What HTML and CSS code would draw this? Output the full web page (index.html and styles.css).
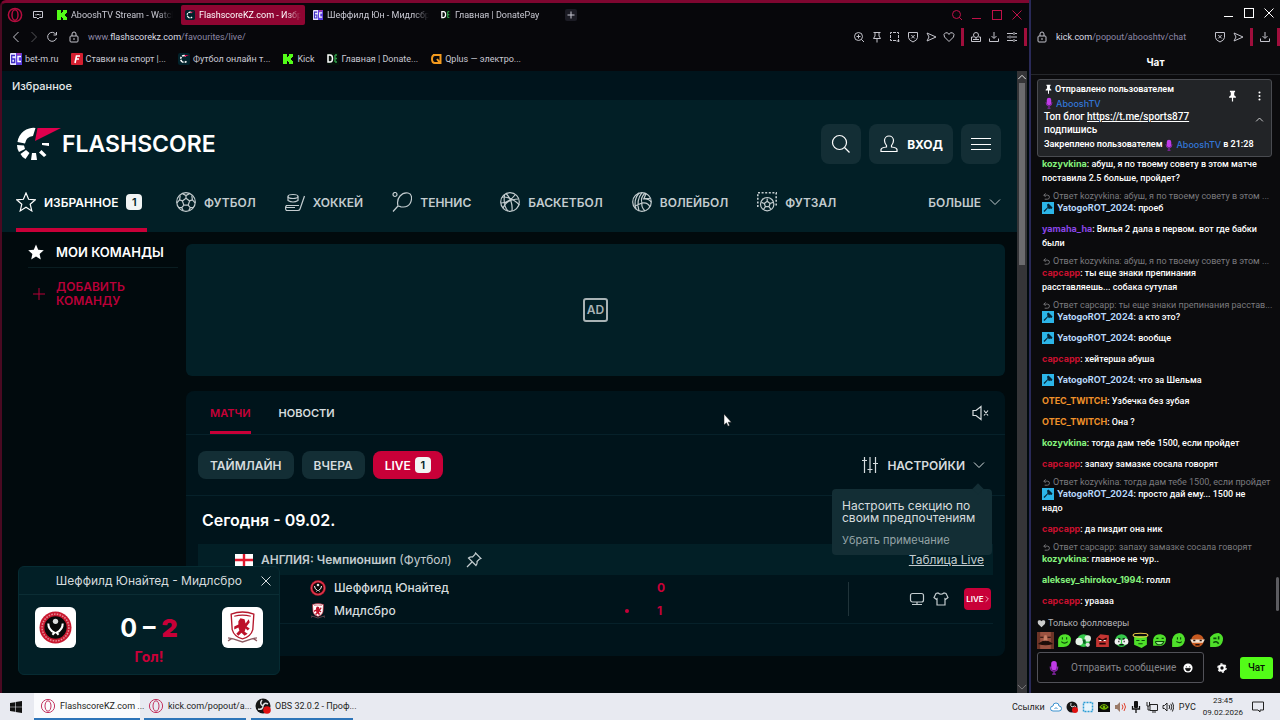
FILE: index.html
```html
<!DOCTYPE html>
<html lang="ru">
<head>
<meta charset="utf-8">
<title>FlashscoreKZ.com - Избранное</title>
<link rel="stylesheet" href="styles.css">
</head>
<body>
<svg class="defs" aria-hidden="true">
  <symbol id="opera" viewBox="0 0 16 16"><circle cx="8" cy="8" r="6.6"/><ellipse cx="8" cy="8" rx="3" ry="5.2"/></symbol>
  <symbol id="kick" viewBox="0 0 10 10"><path fill="#53fc18" d="M0 0h4v3h1V2h1V0h4v3H9v1H8v2h1v1h1v3H6V8H5V7H4v3H0z"/></symbol>
  <symbol id="fs" viewBox="0 0 12 12"><rect width="12" height="12" rx="2" fill="#02222b"/><path d="M8 3.2A3.4 3.4 0 1 0 8.8 8" fill="none" stroke="#fff" stroke-width="1.5" stroke-dasharray="4 1 2 1"/><path d="M6 4l1-2h4z" fill="#e00045"/></symbol>
  <symbol id="bc" viewBox="0 0 12 12"><rect width="12" height="12" rx="1" fill="#e8e4ff"/><path d="M6 0h6v12H6z" fill="#5a3cdf"/><path d="M5 2.500H1.700v7h3V6h-3" fill="none" stroke="#3b2bc4" stroke-width="1.300"/><path d="M11 3.500H8v5h3" fill="none" stroke="#fff" stroke-width="1.400"/><path d="M7 1h4" stroke="#f03a7b"/></symbol>
  <symbol id="dp" viewBox="0 0 12 12"><rect width="12" height="12" fill="#06100a"/><path d="M1 2v7h2q2.500 0 2.500-3.500T3 2z" fill="none" stroke="#fff" stroke-width="1.500"/><path d="M8 2v7M8 2h2M8 5.500h2M8 9h2" stroke="#2f9e48" stroke-width="1.400"/></symbol>
  <symbol id="lock" viewBox="0 0 12 12"><rect x="2" y="5" width="8" height="6" rx="1"/><path d="M4 5V3a2 2 0 0 1 4 0v2M6 7v2"/></symbol>
  <symbol id="shield" viewBox="0 0 12 12"><path d="M1.500 1.500h9v5q0 2.500-4.500 4.500-4.500-2-4.500-4.500zM4.300 4l3.400 3.400M7.700 4L4.300 7.400"/></symbol>
  <symbol id="send" viewBox="0 0 12 12"><path d="M2 2l9 4-9 4 2-4z"/></symbol>
  <symbol id="down" viewBox="0 0 12 12"><path d="M6 1v6M3.500 5L6 7.500 8.500 5M1.500 7.500v3h9v-3"/></symbol>
  <symbol id="min" viewBox="0 0 12 12"><path d="M1 9.500h9"/></symbol>
  <symbol id="max" viewBox="0 0 12 12"><rect x="1.500" y="1.500" width="9" height="9"/></symbol>
  <symbol id="x" viewBox="0 0 12 12"><path d="M1.500 1.500l9 9M10.500 1.500l-9 9"/></symbol>
  <symbol id="chev" viewBox="0 0 12 12"><path d="M1 3.500l5 5 5-5"/></symbol>
  <symbol id="chevup" viewBox="0 0 12 12"><path d="M1.500 8.500L6 4l4.500 4.500"/></symbol>
  <symbol id="ball" viewBox="0 0 20 20"><circle cx="10" cy="10" r="9.300"/><path d="M10 6.300l3.600 2.600-1.400 4.200H7.800L6.400 8.900zM10 6.300V3.500M13.600 8.900l2.800-1M12.200 13.100l2 2.600M7.800 13.100l-2 2.600M6.400 8.900l-2.800-1M6.500 1.600L10 3.500l3.500-1.900M16.400 7.900l-.6-4.400M16.400 7.900l2.700 3M14.200 15.700l3.500-.2M14.200 15.700l-1.500 3M5.800 15.700l-3.500-.2M5.800 15.700l1.500 3M3.600 7.900L.9 10.900M3.600 7.900l.6-4.400"/></symbol>
  <symbol id="mic" viewBox="0 0 12 16"><rect x="3" y="1" width="6" height="10" rx="3" fill="#c13be8"/><path d="M2 7q0 5 4 5t4-5M6 12v3M4 15h4" fill="none" stroke="#8e27b0" stroke-width="1.300"/></symbol>
  <symbol id="pin" viewBox="0 0 12 14"><path fill="#fff" d="M3 1h6v1.500H8V6l2 2v1H6.700v4.500H5.300V9H2V8l2-2V2.500H3z"/></symbol>
  <symbol id="hammer" viewBox="0 0 12 12"><rect width="12" height="12" fill="#2cb5e8"/><path d="M5 2.500l1.500-1 4 4L9.500 7 8 6.500 7 7.200 6 6l-3.500 4L1.500 9 5.500 5.200z" fill="#062536"/></symbol>
  <symbol id="reply" viewBox="0 0 10 10"><path d="M4 1.500L2 3.500l2 2M2 3.500h4a2 2 0 0 1 0 4.500H3"/></symbol>
  <symbol id="sheff" viewBox="0 0 32 32"><circle cx="16" cy="16" r="15.500" fill="#c9182f"/><circle cx="16" cy="16" r="13" fill="none" stroke="#e58a94" stroke-width="1.500" stroke-dasharray="1.500 1.200"/><circle cx="16" cy="16" r="10.800" fill="#090909"/><circle cx="16" cy="10" r="2.600" fill="#ddd"/><path d="M9 12q0 6 6 9l-2 2M23 12q0 6-6 9l2 2" fill="none" stroke="#fff" stroke-width="2"/></symbol>
  <symbol id="boro" viewBox="0 0 32 32"><path d="M5 3q11-4 22 0l-1 15q-2 7-10 9-8-2-10-9z" fill="#fff" stroke="#b5172b" stroke-width="1.300"/><path d="M8 5q8-2 16 0" stroke="#b5172b" fill="none"/><path d="M12 10l2-3 4 1 1 4 3-4 1 3-3 4 3 2-2 2-2-2-1 3 3 2-3 2-3-3-3 3-2-2 3-3-1-3-4 2 0-3 4-2z" fill="#bd1129"/><path d="M2 26l5 1 9 3 9-3 5-1M2 29l3-2M30 29l-3-2" fill="none" stroke="#8d5b62" stroke-width="1.300"/></symbol>
</svg>

<div class="desktop">
  <section class="browser">
    <div class="tabs">
      <svg class="ico opera"><use href="#opera"/></svg>
      <svg class="ico pad" viewBox="0 0 14 12"><path d="M2.500 2.500h9v6H8.500L7 10 5.500 8.500h-3zM5 5v1.500M9 5v1.500M6 5.500h2"/></svg>
      <button class="tab"><svg><use href="#kick"/></svg><span>AbooshTV Stream - Watch</span></button>
      <button class="tab active"><svg><use href="#fs"/></svg><span>FlashscoreKZ.com - Избр</span></button>
      <button class="tab"><svg><use href="#bc"/></svg><span>Шеффилд Юн - Мидлсбр</span></button>
      <button class="tab"><svg><use href="#dp"/></svg><span>Главная | DonatePay</span></button>
      <button class="plus" aria-label="Новая вкладка"><svg class="ico" viewBox="0 0 12 12"><path d="M6 2.500v7M2.500 6h7"/></svg></button>
      <div class="controls red">
        <svg class="ico" viewBox="0 0 12 12"><circle cx="5.500" cy="5.500" r="4"/><path d="M8 8l3 3"/></svg>
        <svg class="ico"><use href="#min"/></svg><svg class="ico"><use href="#max"/></svg><svg class="ico"><use href="#x"/></svg>
      </div>
    </div>
    <div class="toolbar">
      <svg class="ico"><use href="#chev" transform="rotate(90 6 6)"/></svg>
      <svg class="ico dim"><use href="#chev" transform="rotate(-90 6 6)"/></svg>
      <svg class="ico" viewBox="0 0 12 12"><path d="M10 3.500A4.500 4.500 0 1 0 10.500 7M10.500 1v3h-3"/></svg>
      <svg class="ico padlock"><use href="#lock"/></svg>
      <p class="url">www.<b>flashscorekz.com</b>/favourites/live/</p>
      <div class="tools">
        <svg class="ico" viewBox="0 0 12 12"><circle cx="5.500" cy="5.500" r="4"/><path d="M8.500 8.500L11 11M3.500 5.500h4M5.500 3.500v4"/></svg>
        <svg class="ico" viewBox="0 0 12 12"><path d="M2.500 1.500h7M4 1.500V5L2.500 7.500h7L8 5V1.500M6 7.500v4"/></svg>
        <svg class="ico" viewBox="0 0 12 12"><path d="M9.500 7V1.500h-8v8H7M9.500 8v4M7.500 10h4" stroke-dasharray="3 1"/></svg>
        <svg class="ico"><use href="#shield"/></svg>
        <svg class="ico"><use href="#send"/></svg>
        <svg class="ico" viewBox="0 0 12 12"><path d="M6 10.500L1.500 6Q0 3 2.500 1.800 5 1 6 3.500 7 1 9.500 1.800 12 3 10.500 6z"/></svg>
      </div>
      <i class="mark"></i>
      <div class="tools">
        <svg class="ico" viewBox="0 0 12 12"><circle cx="6" cy="4" r="2.500"/><path d="M3.500 6h-2v4.500h9V6h-2M3 8.500h6M6 6.500v2"/></svg>
        <svg class="ico"><use href="#down"/></svg>
        <svg class="ico" viewBox="0 0 12 12"><path d="M1 2.500h6M9 2.500h2M1 6h2M5 6h6M1 9.500h6M9 9.500h2M8 1v3M4 4.500v3M8 8v3"/></svg>
      </div>
      <i class="mark"></i>
    </div>
    <nav class="bookmarks">
      <a href="#"><svg><use href="#bc"/></svg>bet-m.ru</a>
      <a href="#"><svg viewBox="0 0 12 12"><rect width="12" height="12" rx="1" fill="#d41f30"/><path d="M4 10l1.500-7H9M5 6h3" stroke="#fff" stroke-width="1.600" fill="none"/></svg>Ставки на спорт |...</a>
      <a href="#"><svg><use href="#fs"/></svg>Футбол онлайн т...</a>
      <a href="#"><svg viewBox="-1 -1 12 12"><use href="#kick" width="10" height="10"/></svg>Kick</a>
      <a href="#"><svg><use href="#dp"/></svg>Главная | Donate...</a>
      <a href="#"><svg viewBox="0 0 12 12"><path d="M3 2h7.500v8H5Q2 10 2 6t3-4M7 6l3 4" fill="none" stroke="#f39a1e" stroke-width="2"/></svg>Qplus — электро...</a>
    </nav>

    <div class="viewport">
      <div class="site">
        <div class="crumb">Избранное</div>
        <header class="head">
          <div class="brandrow">
            <a class="brand" href="#">
              <svg viewBox="0 0 46 34"><g fill="#fff"><path d="M1.500 15A16 16 0 0 1 19.500 1L17 9a9 9 0 0 0-8 7.500zM1 18l7 .5 1 3.500-6 3Q1 22 1 18zM4.500 27l5.500-4 3.500 3-4 6q-3-1-5-5zM15 33l1-7h4l1 7zM23 25.500l2.500-2.500 5 5-2.500 2zM26 16h7v3l-7-1z"/></g><path d="M21.500 1h23.500L19 14z" fill="#e0004d"/></svg>
              <span>FLASHSCORE</span>
            </a>
            <div class="actions">
              <button aria-label="Поиск"><svg class="ln" viewBox="0 0 20 20"><circle cx="8.500" cy="8.500" r="7"/><path d="M13.500 13.500l5 5"/></svg></button>
              <button><svg class="ln" viewBox="0 0 20 20"><path d="M7.500 11.500Q5.500 9 5.500 6.500a4.500 4.500 0 0 1 9 0q0 2.500-2 5v1.500q5 .5 5.500 2.500v2H2v-2q.5-2 5.500-2.500z"/></svg>ВХОД</button>
              <button aria-label="Меню"><svg class="ln" viewBox="0 0 20 20"><path d="M0 4.500h20M0 10.500h20M0 15.500h20"/></svg></button>
            </div>
          </div>
          <nav class="sports">
            <a class="on" href="#"><svg class="ln" viewBox="0 0 20 20"><path d="M10 1l2.600 6.300 6.800.5-5.200 4.400 1.600 6.700L10 15.300l-5.800 3.600 1.600-6.700L.6 7.800l6.800-.5z"/></svg>ИЗБРАННОЕ<em class="num">1</em></a>
            <a href="#"><svg class="ln"><use href="#ball"/></svg>ФУТБОЛ</a>
            <a href="#"><svg class="ln" viewBox="0 0 20 20"><ellipse cx="8" cy="4.500" rx="5" ry="2"/><path d="M3 4.500v4q5 3 10 0v-4M19.500 4L15 17q-.5 1.500-2 1.500H1.500q-1-1-1-2.500t1-2.500H14M1 15.500h9"/></svg>ХОККЕЙ</a>
            <a href="#"><svg class="ln" viewBox="0 0 20 20"><circle cx="3" cy="2.500" r="2"/><path d="M6 14Q4.500 8 8 4t8-3q4 1 3.500 6t-4 7-9.500 0zM6 14q2 0 3 1M6 14l-5 5.500"/></svg>ТЕННИС</a>
            <a href="#"><svg class="ln" viewBox="0 0 20 20"><circle cx="10" cy="10" r="9.300"/><path d="M6 1.500q7 7 6 17.500M2 5q10 0 17.500 8M1 11q8 0 14-8M3 16Q7 7 18.500 7M8 19Q3 14 4.500 3"/></svg>БАСКЕТБОЛ</a>
            <a href="#"><svg class="ln" viewBox="0 0 20 20"><circle cx="10" cy="10" r="9.300"/><path d="M7 1Q1 8 4 17M10 .700Q4 8 7 19M13 1q-5 5-3 10M11 7q6-1 8 3M10 11q6-1 8 4M10 11q-1 4 3 8M3 14l7-3M14 1.500l-2 5 6 0"/></svg>ВОЛЕЙБОЛ</a>
            <a href="#"><svg class="ln" viewBox="0 0 20 20"><path d="M.800 15V.800h18.400V15" stroke-width="1.600" stroke-dasharray="2 1.600"/><g transform="translate(3 5) scale(.72)" stroke-width="1.700"><circle cx="10" cy="10" r="9.300"/><path d="M10 6l4 3-1.500 4.500h-5L6 9zM10 6V2M14 9l4-1.500M12.500 13.500l2.500 3.500M7.500 13.500L5 17M6 9L2 7.500"/></g></svg>ФУТЗАЛ</a>
            <a class="more" href="#">БОЛЬШЕ<svg class="ico"><use href="#chev"/></svg></a>
          </nav>
        </header>
        <div class="columns">
          <aside class="side">
            <h2><svg viewBox="0 0 16 16"><path fill="#fff" d="M8 .500l2.200 5.200 5.600.5-4.200 3.700 1.200 5.500L8 12.500l-4.800 2.900 1.200-5.500L.2 6.200l5.600-.5z"/></svg>МОИ КОМАНДЫ</h2>
            <button><svg class="ico" viewBox="0 0 12 12"><path d="M6 0v12M0 6h12"/></svg>ДОБАВИТЬ КОМАНДУ</button>
          </aside>
          <main class="main">
            <div class="ad"><span>AD</span></div>
            <section class="card">
              <div class="cardtabs">
                <a class="on" href="#">МАТЧИ</a><a href="#">НОВОСТИ</a>
                <svg class="ln mute" viewBox="0 0 18 16"><path d="M1 5.500h3l5-4v13l-5-4H1zM12 5.500l4 5M16 5.500l-4 5"/></svg>
              </div>
              <div class="filters">
                <button>ТАЙМЛАЙН</button><button>ВЧЕРА</button><button class="live">LIVE<em class="num">1</em></button>
                <div class="settings">
                  <svg class="ln" viewBox="0 0 18 18"><path d="M3.500 1v16M9 1v16M14.500 1v16M1 4.500h5M6.500 13.500h5M12 7.500h5"/></svg>НАСТРОЙКИ<svg class="ico"><use href="#chev"/></svg>
                  <div class="tip"><p>Настроить секцию по своим предпочтениям</p><a href="#">Убрать примечание</a></div>
                </div>
              </div>
              <h3>Сегодня - 09.02.</h3>
              <div class="league">
                <svg class="flag" viewBox="0 0 18 12"><path fill="#fff" d="M0 0h18v12H0z"/><path d="M9 0v12M0 6h18" stroke="#e0182d" stroke-width="2.400"/></svg>
                <p><b>АНГЛИЯ: Чемпионшип</b> (Футбол)</p>
                <svg class="ln pushpin" viewBox="0 0 16 16"><path d="M9.500 1l5.500 5.500-1.500.5-2.500 2.500q.5 2-1 4L2.500 6q2-1.500 4-1L9 2.500zM6 10l-5 5"/></svg>
                <a href="#">Таблица Live</a>
              </div>
              <div class="match">
                <div class="team"><svg><use href="#sheff"/></svg><span>Шеффилд Юнайтед</span><i></i><b>0</b></div>
                <div class="team"><svg><use href="#boro"/></svg><span>Мидлсбро</span><i class="dot"></i><b>1</b></div>
                <div class="extras">
                  <svg class="ln" viewBox="0 0 16 14"><rect x="1.500" y="1.500" width="13" height="8.500" rx="2"/><path d="M8 10v2.500M3 12.500h10"/></svg>
                  <svg class="ln" viewBox="0 0 16 14"><path d="M5 1q3 2.500 6 0l2 .5 2 4-2.500 2-.5-.5v6H4V7l-.5.500L1 5.500 3 1.500z"/></svg>
                  <button>LIVE<svg viewBox="0 0 6 10"><path d="M1 1l4 4-4 4"/></svg></button>
                </div>
              </div>
            </section>
          </main>
        </div>
      </div>
      <div class="scroll"><svg class="ico" viewBox="0 0 12 12"><use href="#chevup"/></svg><i></i><svg class="ico end" viewBox="0 0 12 12"><use href="#chev"/></svg></div>
      <div class="goal">
        <div class="goalhead"><span>Шеффилд Юнайтед - Мидлсбро</span><button aria-label="Закрыть"><svg class="ico"><use href="#x"/></svg></button></div>
        <div class="goalbody">
          <span class="crest"><svg><use href="#sheff"/></svg></span>
          <p class="score">0 – <b>2</b></p>
          <span class="crest"><svg><use href="#boro"/></svg></span>
        </div>
        <p class="gol">Гол!</p>
      </div>
      <svg class="cursor" viewBox="0 0 9 14"><path fill="#fff" stroke="#111" stroke-width=".500" d="M1 1v11l2.500-2.200L5 13.200l1.600-.7L5.200 9.200h3.200z"/></svg>
    </div>
  </section>

  <section class="chatwin">
    <div class="controls white"><svg class="ico"><use href="#min"/></svg><svg class="ico"><use href="#max"/></svg><svg class="ico"><use href="#x"/></svg></div>
    <div class="toolbar">
      <svg class="ico"><use href="#lock"/></svg>
      <p class="url"><b>kick.com</b>/popout/abooshtv/chat</p>
      <svg class="ico"><use href="#shield"/></svg><svg class="ico"><use href="#send"/></svg><i class="mark"></i><svg class="ico"><use href="#down"/></svg><i class="mark"></i>
    </div>
    <h1>Чат</h1>
    <div class="pinned">
      <div class="pintext">
        <p class="small"><svg><use href="#pin"/></svg>Отправлено пользователем</p>
        <p class="small"><svg class="mic"><use href="#mic"/></svg><a href="#">AbooshTV</a></p>
        <p>Топ блог <u>https://t.me/sports877</u><br>подпишись</p>
        <p class="small foot">Закреплено пользователем <svg class="mic"><use href="#mic"/></svg><a href="#">AbooshTV</a> в 21:28</p>
      </div>
      <div class="pinbtns"><svg><use href="#pin"/></svg><svg viewBox="0 0 12 14" fill="#fff"><circle cx="6" cy="3" r="1.200"/><circle cx="6" cy="7" r="1.200"/><circle cx="6" cy="11" r="1.200"/></svg><svg class="ico up" viewBox="0 0 12 12"><use href="#chevup"/></svg></div>
    </div>
    <ul class="messages">
      <li><b class="g">kozyvkina</b>: абуш, я по твоему совету в этом матче поставила 2.5 больше, пройдет?</li>
      <li><p><svg class="ico"><use href="#reply"/></svg>Ответ kozyvkina: абуш, я по твоему совету в этом ...</p><svg class="hm"><use href="#hammer"/></svg><b class="y">YatogoROT_2024</b>: проеб</li>
      <li><b class="v">yamaha_ha</b>: Вилья 2 дала в первом. вот где бабки были</li>
      <li><p><svg class="ico"><use href="#reply"/></svg>Ответ kozyvkina: абуш, я по твоему совету в этом ...</p><b class="r">capcapp</b>: ты еще знаки препинания расставляешь... собака сутулая</li>
      <li><p><svg class="ico"><use href="#reply"/></svg>Ответ capcapp: ты еще знаки препинания расстав...</p><svg class="hm"><use href="#hammer"/></svg><b class="y">YatogoROT_2024</b>: а кто это?</li>
      <li><svg class="hm"><use href="#hammer"/></svg><b class="y">YatogoROT_2024</b>: вообще</li>
      <li><b class="r">capcapp</b>: хейтерша абуша</li>
      <li><svg class="hm"><use href="#hammer"/></svg><b class="y">YatogoROT_2024</b>: что за Шельма</li>
      <li><b class="o">OTEC_TWITCH</b>: Узбечка без зубая</li>
      <li><b class="o">OTEC_TWITCH</b>: Она ?</li>
      <li><b class="g">kozyvkina</b>: тогда дам тебе 1500, если пройдет</li>
      <li><b class="r">capcapp</b>: запаху замазке сосала говорят</li>
      <li><p><svg class="ico"><use href="#reply"/></svg>Ответ kozyvkina: тогда дам тебе 1500, если пройдет</p><svg class="hm"><use href="#hammer"/></svg><b class="y">YatogoROT_2024</b>: просто дай ему... 1500 не надо</li>
      <li><b class="r">capcapp</b>: да пиздит она ник</li>
      <li><p><svg class="ico"><use href="#reply"/></svg>Ответ capcapp: запаху замазке сосала говорят</p><b class="g">kozyvkina</b>: главное не чур..</li>
      <li><b class="g">aleksey_shirokov_1994</b>: голлл</li>
      <li><b class="r">capcapp</b>: ураааа</li>
    </ul>
    <div class="composer">
      <p class="followers"><svg viewBox="0 0 12 12"><path fill="#ccc" d="M6 11L1.500 6.500Q0 3 2.500 1.800 5 1 6 3 7 1 9.500 1.800 12 3 10.500 6.500z"/></svg>Только фолловеры</p>
      <div class="emotes">
        <svg viewBox="0 0 16 16"><path fill="#9a5240" d="M0 0h16v16H0z"/><path fill="#6d3427" d="M0 0h3v16H0zM13 0h3v16h-3z"/><path d="M2 11q6-5 12 0-6 2-12 0zM3 5h3M10 5h3" fill="#1d0e0a" stroke="#1d0e0a"/><path d="M7 3h2l1 5H6z" fill="#c98066"/></svg>
        <svg viewBox="0 0 16 16"><path fill="#4fe02a" d="M2 14V7q1-5 7-5 6 1 5 6-1 6-7 6z"/><path d="M6 5v2M10 5v2M5 9q3 3 6 0" stroke="#0a4a08" fill="none"/></svg>
        <svg viewBox="0 0 16 16"><circle cx="8" cy="8" r="6" fill="#35c84a"/><circle cx="4" cy="9" r="3.500" fill="#e7f3e8"/><circle cx="12" cy="6" r="3" fill="#dff0e0"/><path d="M7 7h3v4H8z" fill="#0b5f20"/><circle cx="12" cy="12" r="2" fill="#ddd"/></svg>
        <svg viewBox="0 0 16 16"><path fill="#c53532" d="M2 14V6l4-4 8 1v11z"/><path d="M4 6l4 2M12 6L8 8M5 11h6" stroke="#280606" stroke-width="1.600"/><path d="M5 8h2M9 8h2" stroke="#fff"/></svg>
        <svg viewBox="0 0 16 16"><circle cx="8" cy="8" r="6" fill="#35c84a"/><circle cx="4.500" cy="9" r="3" fill="#f2f2f2"/><circle cx="11.500" cy="9" r="3" fill="#f2f2f2"/><path d="M5 6l2 1M11 6L9 7M5 9h1M10 9h1M6 12h4" stroke="#111" stroke-width="1.400"/></svg>
        <svg viewBox="0 0 16 16"><path fill="#4fe02a" d="M2 4h12v8l-5 3-7-3z"/><ellipse cx="8" cy="3" rx="7" ry="1.800" fill="none" stroke="#f2cf4a"/><path d="M4 8h3M9 8h3M6 11h4" stroke="#0a4a08"/></svg>
        <svg viewBox="0 0 16 16"><path fill="#4fe02a" d="M2 13V7q1-5 7-5 6 1 5 6-1 6-7 5z"/><path d="M5 6h2M10 6h2M4 9h8q-1 3-4 3T4 9" stroke="#0a4a08" fill="#9be88a"/></svg>
        <svg viewBox="0 0 16 16"><path fill="#4fe02a" d="M2 14V7q2-6 7-6 5 1 5 7-1 6-7 6z"/><path d="M7 5v2M10 5v2M6 9q3 2 5 0" stroke="#0a4a08" fill="none"/></svg>
        <svg viewBox="0 0 16 16"><circle cx="8" cy="8" r="6" fill="#c75a20"/><path d="M1 7h14l-2 3H3z" fill="#f2e3d2"/><path d="M4 8h2M10 8h2M6 12h4" stroke="#26100a" stroke-width="1.600"/></svg>
        <svg viewBox="0 0 16 16"><path fill="#4fe02a" d="M2 14V5q3-4 8-4 5 2 4 7-1 6-7 6z"/><path d="M5 6h3M10 4v3M5 10q3-2 5 1" stroke="#0a4a08" stroke-width="1.500" fill="none"/></svg>
      </div>
      <div class="sendrow">
        <label class="field"><svg><use href="#mic"/></svg><input type="text" aria-label="Сообщение" placeholder="Отправить сообщение"><svg class="smile" viewBox="0 0 12 12"><circle cx="6" cy="6" r="5.500" fill="#fff"/><path d="M3.500 4.500h1M7.500 4.500h1M3 6.500h6Q8.500 9.500 6 9.500T3 6.500" stroke="#111" fill="#111"/></svg></label>
        <button class="gear" aria-label="Настройки чата"><svg viewBox="0 0 12 12"><circle cx="6" cy="6" r="3.200" fill="none" stroke="#fff" stroke-width="2.400"/><circle cx="6" cy="6" r="4.900" fill="none" stroke="#fff" stroke-width="1.600" stroke-dasharray="2.500 2.630"/></svg></button>
        <button class="send">Чат</button>
      </div>
    </div>
    <i class="thumb"></i>
  </section>
</div>

<footer class="taskbar">
  <button class="start" aria-label="Пуск"><svg viewBox="0 0 12 12"><path fill="#111" d="M0 2l5-.8V5.700H0zM5.600 1L12 0v5.700H5.600zM0 6.300h5v4.500L0 10zM5.600 6.300H12V12l-6.400-1z"/></svg></button>
  <button class="task on"><svg class="opera"><use href="#opera"/></svg>FlashscoreKZ.com ...</button>
  <button class="task"><svg class="opera"><use href="#opera"/></svg>kick.com/popout/a...</button>
  <button class="task"><svg viewBox="0 0 16 16"><circle cx="8" cy="8" r="7.500" fill="#161616"/><path d="M7 2q-3 4 1 6M3 11q5 1 5-3M13 6q-4-2-5 2" stroke="#ddd" stroke-width="1.500" fill="none"/><circle cx="12" cy="12" r="3.800" fill="#e01010"/></svg>OBS 32.0.2 - Проф...</button>
  <div class="tray">
    <span>Ссылки</span>
    <svg viewBox="0 0 12 12"><path d="M3 10a2.500 2.500 0 0 1 0-5 3 3 0 0 1 6 0 2.500 2.500 0 0 1 0 5zM4.500 8L6 6.500 7.500 8" fill="#fff" stroke="#3c93d0"/></svg>
    <svg viewBox="0 0 12 12"><circle cx="6" cy="6" r="5.500" fill="#161616"/><path d="M5 2q-1 3 1 4 3-2 4 0" stroke="#ddd" fill="none"/><circle cx="9" cy="9" r="3" fill="#e01010"/></svg>
    <svg viewBox="0 0 12 12"><rect x="1.500" y="1.500" width="9" height="9" fill="#e8f5fc" stroke="#2b9bd4" stroke-width="1.500" stroke-dasharray="2 1"/></svg>
    <svg viewBox="0 0 12 12"><path fill="#0a0a0a" d="M0 1h12v10H0z"/><path d="M2 6q4-5 8 0-4 4-8 0z" fill="none" stroke="#76b900" stroke-width="1.200"/><circle cx="6" cy="6" r="1.400" fill="#76b900"/></svg>
    <svg viewBox="0 0 12 12"><path d="M1 4h2l3-3v10L3 8H1z" fill="#9a7a68"/><path d="M8 3.500q2 2.500 0 5M10 2q3 4 0 8" stroke="#e0402c" fill="none"/></svg>
    <svg viewBox="0 0 12 12"><rect x="4" y="0" width="4" height="7" rx="1" fill="#111"/><path d="M2.500 5v3h7V5M6 8v4" stroke="#111" stroke-width="1.300" fill="none"/></svg>
    <svg viewBox="0 0 12 12"><path d="M4 3.500h7.500v6H4zM6 11h4M1 1v4h2.500V1M2 5v4h2" stroke="#222" fill="none"/></svg>
    <svg viewBox="0 0 12 12"><path d="M1 4.500h1.500L5 2v8L2.500 7.500H1zM7 4q1.500 2 0 4M8.800 2.800q2.200 3 0 6.400M10.400 1.500q3 4.500 0 9" stroke="#222" fill="none"/></svg>
    <span>РУС</span>
    <time>23:45<br>09.02.2026</time>
    <svg viewBox="0 0 12 12"><path d="M.500 1h11v8H8v2L6 9H.500z" stroke="#222" fill="none"/></svg>
  </div>
</footer>
</body>
</html>
```
FILE: styles.css
```css
* { box-sizing: border-box; }
body {
  margin: 0;
  min-height: 100vh;
  display: flex;
  flex-direction: column;
  background: #000;
  color: #fff;
  font-family: Inter, "Noto Sans", sans-serif;
  font-size: 12px;
}
p, h1, h2, h3, ul { margin: 0; padding: 0; }
a { color: inherit; text-decoration: none; }
button { border: 0; padding: 0; margin: 0; background: none; color: inherit; font: inherit; }
svg { flex: none; display: block; width: 12px; height: 12px; }
.defs { position: absolute; width: 0; height: 0; }
.ico, .ln { fill: none; stroke: currentColor; stroke-width: 1; }
.ln { stroke-width: 1.2; }

.desktop { flex: 1; display: flex; min-height: 0; }

/* Main browser window */
.browser {
  flex: 1;
  min-width: 0;
  display: flex;
  flex-direction: column;
  background: #07070b;
  border-top: 3px solid #7d0630;
  border-left: 2px solid #4a0a22;
  border-top-left-radius: 6px;
}
.tabs, .bookmarks, .toolbar { font-family: Roboto, "Noto Sans", sans-serif; }
.tabs { display: flex; align-items: center; height: 23px; padding: 0 6px 0 5px; font-size: 9px; color: #c9c9d3; }
.tabs .opera { width: 16px; height: 16px; color: #b50d3f; stroke-width: 1.5; }
.tabs .pad { width: 14px; margin: 0 8px; }
.tab { display: flex; align-items: center; gap: 4px; width: 124px; height: 20px; padding: 0 4px; margin-right: 4px; }
.tab span { flex: 1; text-align: left; overflow: hidden; white-space: nowrap; -webkit-mask-image: linear-gradient(90deg, #000 85%, transparent); mask-image: linear-gradient(90deg, #000 85%, transparent); }
.tab svg { width: 10px; height: 10px; }
.tab.active { background: #8f0532; color: #fff; border-radius: 2px; }
.plus { padding: 0; border-radius: 2px; background: #1b1b24; }
.controls { display: flex; gap: 8px; margin-left: auto; }
.red { color: #c01048; }
.toolbar { display: flex; align-items: center; gap: 6px; height: 21px; padding: 0 2px 0 8px; color: #c4c4cc; }
.padlock { margin-left: 4px; }
.dim { opacity: .4; }
.url { flex: 1; font-size: 9px; color: #8d88a6; margin-left: 2px; white-space: nowrap; }
.url b { font-weight: 400; color: #dcdce4; }
.tools { display: flex; gap: 6px; }
.mark { width: 3px; height: 18px; background: #a00e3c; }
.bookmarks { display: flex; align-items: center; gap: 12px; height: 24px; padding: 0 8px 1px; font-size: 9px; color: #c9c9d3; white-space: nowrap; }
.bookmarks a { display: flex; align-items: center; gap: 3px; }

.viewport { flex: 1; display: flex; position: relative; background: #010a0d; }
.site { flex: 1; min-width: 0; }
.crumb { height: 29px; padding: 8px 10px; line-height: 14px; font-size: 11px; font-weight: 500; background: #00141c; color: #e4e8e9; }
.head { background: #021f26; padding: 24px 16px 0 14px; }
.brandrow { display: flex; align-items: center; justify-content: space-between; }
.brand { display: flex; align-items: center; font-size: 23px; font-weight: 600; }
.brand svg { width: 46px; height: 34px; }
.actions { display: flex; gap: 8px; }
.actions button { display: flex; align-items: center; gap: 8px; height: 40px; padding: 0 10px; border-radius: 8px; background: #132e35; font-weight: 700; }
.actions svg, .sports .ln { width: 20px; height: 20px; }
.sports { display: flex; gap: 29px; height: 68px; font-weight: 600; color: #c3cccf; }
.sports a { display: flex; align-items: center; gap: 8px; padding-top: 8px; }
.sports .on { min-width: 131px; color: #fff; border-bottom: 4px solid #c80038; padding-top: 12px; }
.sports .more { margin-left: auto; }
.num { min-width: 16px; height: 16px; border-radius: 4px; background: #f1f4f4; color: #021f26; font-size: 11px; line-height: 16px; font-style: normal; text-align: center; }

.columns { display: flex; gap: 8px; padding: 12px 12px 12px 26px; }
.side { width: 150px; }
.side h2 { display: flex; align-items: center; gap: 12px; height: 24px; padding-bottom: 8px; border-bottom: 1px solid #0a1d21; font-size: 13px; font-weight: 600; white-space: nowrap; }
.side h2 svg { width: 16px; height: 16px; }
.side button { display: flex; align-items: center; gap: 11px; width: 120px; margin-top: 12px; padding-left: 5px; color: #b80038; font-size: 12px; font-weight: 600; line-height: 14px; text-align: left; }
.main { flex: 1; min-width: 0; }
.ad { display: flex; align-items: center; justify-content: center; height: 132px; border-radius: 6px; background: #021f26; }
.ad span { padding: 2px; border: 2px solid #a9b3b5; border-radius: 3px; color: #a9b3b5; font-weight: 600; line-height: 16px; }
.card { margin-top: 15px; padding-bottom: 32px; border-radius: 8px; background: #00141b; }
.cardtabs { display: flex; gap: 28px; height: 44px; padding: 0 15px 0 24px; border-bottom: 1px solid #06212a; font-size: 11px; font-weight: 600; line-height: 14px; color: #d6dcde; }
.cardtabs a { padding-top: 15px; }
.cardtabs .on { color: #c80038; border-bottom: 3px solid #c80038; }
.mute { width: 18px; height: 16px; margin: 14px 0 0 auto; }
.filters { display: flex; align-items: center; gap: 8px; padding: 16px 20px 16px 12px; border-bottom: 1px solid #06212a; font-size: 12px; font-weight: 600; color: #d6dcde; }
.filters button { display: flex; align-items: center; gap: 4px; height: 28px; padding: 0 12px; border-radius: 8px; background: #132e35; }
.filters .live { background: #c80038; color: #fff; }
.settings { position: relative; display: flex; align-items: center; gap: 8px; margin-left: auto; }
.settings .ln { width: 18px; height: 18px; }
.tip { position: absolute; top: 33px; right: -7px; width: 160px; padding: 11px 10px 9px; border-radius: 4px; background: #132e35; font-weight: 400; line-height: 12px; }
.tip::before { content: ""; position: absolute; top: -4px; right: 10px; width: 8px; height: 8px; background: #132e35; transform: rotate(45deg); }
.tip p { font-size: 12px; }
.tip a { display: block; margin-top: 10px; font-size: 11px; color: #94a3a6; }
.card h3 { padding: 14px 16px; font-size: 16px; font-weight: 600; line-height: 20px; }
.league { display: flex; align-items: center; height: 31px; margin: 0 12px; padding: 0 9px 0 37px; background: #021f26; color: #c3cccf; }
.league p { margin: 0 14px 0 8px; }
.league b { font-weight: 600; }
.league a { margin-left: auto; text-decoration: underline; }
.flag { width: 18px; height: 12px; }
.pushpin { width: 16px; height: 16px; }
.match { display: grid; grid-template-columns: minmax(0, 1fr) 145px; margin: 0 12px; padding: 1px 0; border-bottom: 1px solid #06212a; }
.team { grid-column: 1; display: grid; grid-template-columns: 16px 297px 34px 10px; align-items: center; padding-left: 112px; height: 23px; font-weight: 500; color: #d6dcde; }
.team svg { width: 16px; height: 16px; }
.team span { padding-left: 8px; }
.team b { color: #c80038; }
.dot { width: 4px; height: 4px; margin-left: 2px; border-radius: 2px; background: #c80038; }
.extras { grid-column: 2; grid-row: 1 / 3; display: flex; align-items: center; justify-content: flex-end; gap: 8px; margin: 6px 2px 6px 0; border-left: 1px solid #20343a; color: #c3cccf; }
.extras .ln { width: 16px; height: 14px; }
.extras button { display: flex; align-items: center; justify-content: center; gap: 1px; width: 27px; height: 22px; margin-left: 7px; border-radius: 4px; background: #c80038; color: #fff; font-size: 8px; font-weight: 600; }
.extras button svg { width: 4px; height: 8px; fill: none; stroke: #fff; }
.scroll { display: flex; flex-direction: column; align-items: center; width: 10px; margin-right: 2px; background: #353538; color: #fff; }
.scroll svg { width: 10px; }
.scroll i { width: 6px; height: 182px; background: #6b6b6e; }
.scroll .end { margin-top: auto; opacity: .4; }

.goal { position: absolute; left: 16px; bottom: 18px; width: 262px; padding-bottom: 9px; border: 1px solid #062b32; border-radius: 6px; background: #021f26; }
.goalhead { display: flex; align-items: center; justify-content: flex-end; gap: 18px; height: 28px; padding: 0 7px; border-bottom: 1px solid #0b2d34; color: #d6dcde; }
.goalbody { display: flex; align-items: center; justify-content: space-between; padding: 12px 16px 0; }
.crest { padding: 4px; border-radius: 6px; background: #fff; }
.crest svg { width: 33px; height: 33px; }
.score { font-size: 25px; font-weight: 700; }
.score b, .gol { color: #c80038; }
.gol { text-align: center; font-size: 14px; font-weight: 700; line-height: 17px; }
.cursor { position: absolute; left: 721px; top: 342px; width: 9px; height: 14px; }

/* Chat window */
.chatwin { position: relative; display: flex; flex-direction: column; width: 251px; border-left: 2px solid #2a2a58; background: #0b0b0d; font-family: Roboto, "Noto Sans", sans-serif; }
.chatwin .controls { height: 26px; align-items: center; padding: 0 5px; }
.chatwin .toolbar { gap: 6px; height: 22px; padding: 0 0 0 5px; }
.chatwin h1 { height: 27px; border-bottom: 1px solid #25272b; font-family: Inter, sans-serif; font-size: 10px; font-weight: 700; line-height: 28px; text-align: center; }
.pinned { display: flex; justify-content: space-between; margin: 4px 8px 0 6px; padding: 2px 6px 3px; border: 1px solid #494b50; border-radius: 3px; background: #222427; font-size: 10px; font-weight: 500; line-height: 13px; }
.pinned p { white-space: nowrap; }
.pinned .small { display: flex; align-items: center; gap: 2px; height: 14px; font-size: 9px; font-weight: 600; }
.pinned .foot { height: 17px; }
.pintext { flex: 1; min-width: 0; }
.pintext svg { width: 9px; height: 10px; }
.pintext .mic { width: 10px; height: 12px; }
.pinned a { color: #3377d9; font-family: Inter, sans-serif; font-weight: 500; }
.pinbtns { position: relative; display: flex; gap: 16px; padding-top: 8px; }
.pinbtns svg { width: 11px; height: 12px; }
.pinbtns .up { position: absolute; right: 1px; top: 33px; width: 9px; height: 9px; }
.messages { flex: 1; list-style: none; padding: 0 17px 0 11px; font-size: 9px; font-weight: 500; line-height: 14px; }
.messages li { margin-bottom: 7px; }
.messages li p { display: flex; align-items: center; gap: 2px; height: 9px; color: #7a7a7e; font-size: 9px; font-weight: 400; line-height: 9px; white-space: nowrap; }
.messages li p svg { width: 9px; height: 9px; }
.messages b { font-family: Inter, sans-serif; font-weight: 700; }
.hm { display: inline-block; vertical-align: -3px; margin-right: 3px; }
.g { color: #85f27c; }
.y { color: #b6d5f8; }
.v { color: #8a46e8; }
.r { color: #c9102f; }
.o { color: #f0912a; }
.composer { padding: 0 7px 10px 6px; }
.followers { display: flex; align-items: center; gap: 2px; height: 16px; font-size: 9px; color: #b5b5b9; }
.followers svg { width: 9px; height: 9px; }
.emotes { display: flex; gap: 2px; padding: 1px 0 3px; }
.emotes svg { width: 17px; height: 17px; }
.sendrow { display: flex; align-items: center; }
.field { flex: 1; min-width: 0; display: flex; align-items: center; height: 31px; padding: 0 10px; border: 1px solid #515158; border-radius: 3px; }
.field svg { width: 12px; height: 15px; }
.field .smile { width: 10px; height: 10px; }
.field input { flex: 1; min-width: 0; margin: 0; padding: 0 0 0 11px; border: 0; outline: 0; background: none; color: #fff; font: 10px Roboto, sans-serif; }
.field input::placeholder { color: #85858a; }
.gear { padding: 0 13px; }
.gear svg { width: 10px; height: 10px; }
.send { width: 33px; height: 22px; border-radius: 3px; background: #53fc18; color: #071504; font-size: 10px; font-weight: 500; }
.thumb { position: absolute; right: 1px; bottom: 82px; width: 3px; height: 34px; border-radius: 2px; background: #5c5c60; }

/* Taskbar */
.taskbar { display: flex; height: 27px; background: #e8eaf1; color: #1d1d22; font-family: Roboto, "Noto Sans", sans-serif; font-size: 9px; }
.start { padding: 0 12px 0 10px; }
.task { display: flex; align-items: center; gap: 4px; width: 102px; margin-right: 5px; padding: 0 4px; border-bottom: 2px solid #2e75b9; white-space: nowrap; }
.task.on { width: 106px; background: #fafbfd; margin-right: 4px; padding: 0 6px; }
.task svg { width: 16px; height: 16px; }
.task .opera { fill: none; stroke: #c4335f; }
.tray { display: flex; align-items: center; gap: 4px; margin-left: auto; padding-right: 16px; }
.tray time { margin: 0 5px 0 2px; font-size: 8px; text-align: center; line-height: 12px; }
.tray span { margin: 0 1px; }
```
